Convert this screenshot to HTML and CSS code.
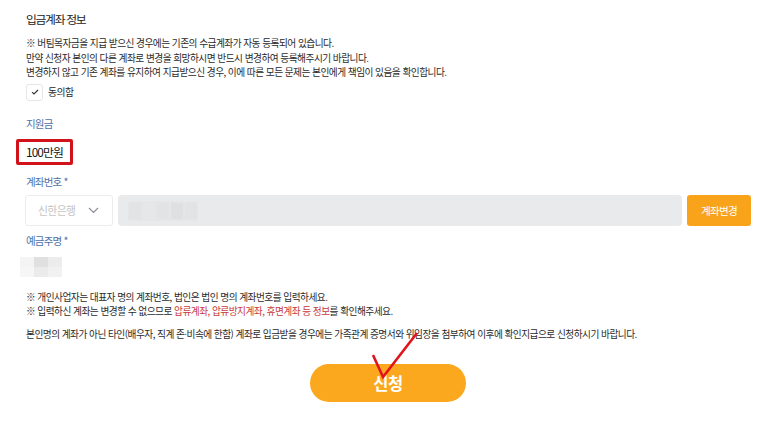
FILE: index.html
```html
<!DOCTYPE html>
<html lang="ko">
<head>
<meta charset="utf-8">
<link rel="stylesheet" href="styles.css">
</head>
<body>
<div class="page">
  <h2 class="title">입금계좌 정보</h2>
  <div class="notice">
    <p>※ 버팀목자금을 지급 받으신 경우에는 기존의 수급계좌가 자동 등록되어 있습니다.</p>
    <p>만약 신청자 본인의 다른 계좌로 변경을 희망하시면 반드시 변경하여 등록해주시기 바랍니다.</p>
    <p>변경하지 않고 기존 계좌를 유지하여 지급받으신 경우, 이에 따른 모든 문제는 본인에게 책임이 있음을 확인합니다.</p>
  </div>
  <label class="agree"><span class="box"><svg width="8" height="6" viewBox="0 0 8 6"><path d="M1 3.2 L3 5 L7 1" fill="none" stroke="#333" stroke-width="1.1"/></svg></span><span>동의함</span></label>

  <div class="label">지원금</div>
  <div class="amount">100만원</div>

  <div class="label">계좌번호 <span class="star">*</span></div>
  <div class="acct-row">
    <div class="select"><span>신한은행</span><svg width="11" height="7" viewBox="0 0 11 7"><path d="M1 1 L5.5 5.5 L10 1" fill="none" stroke="#8a8f99" stroke-width="1.2"/></svg></div>
    <div class="input"><div class="blur"><i></i><i></i><i></i><i></i><i></i></div></div>
    <button class="change">계좌변경</button>
  </div>

  <div class="label">예금주명 <span class="star">*</span></div>
  <div class="name-blur"><i></i><i></i><i></i><i></i><i></i><i></i></div>

  <div class="notes">
    <p>※ 개인사업자는 대표자 명의 계좌번호, 법인은 법인 명의 계좌번호를 입력하세요.</p>
    <p>※ 입력하신 계좌는 변경할 수 없으므로 <span class="red">압류계좌, 압류방지계좌, 휴면계좌 등 정보</span>를 확인해주세요.</p>
  </div>
  <p class="para">본인명의 계좌가 아닌 타인(배우자, 직계 존·비속에 한함) 계좌로 입금받을 경우에는 가족관계 증명서와 위임장을 첨부하여 이후에 확인지급으로 신청하시기 바랍니다.</p>

  <div class="submit-wrap"><button class="submit">신청</button></div>
</div>
<svg class="mark" width="773" height="433" viewBox="0 0 773 433"><path d="M373 355 L383 377 L417 333" fill="none" stroke="#e0141c" stroke-width="2.6" stroke-linejoin="miter"/></svg>
</body>
</html>
```
FILE: styles.css
```css
* { box-sizing: border-box; margin: 0; padding: 0; }
html, body { background: #fff; }
body {
  width: 773px; height: 433px; overflow: hidden; position: relative;
  font-family: "Noto Sans CJK KR", "Noto Sans", sans-serif;
  color: #333;
}
.page { padding: 11px 0 0 26px; }
.title { font-size: 11.8px; font-weight: 400; letter-spacing: -1.3px; line-height: 16px; color: #222; }
.notice { margin-top: 9px; }
.notice p, .notes p, .para { font-size: 9.7px; letter-spacing: -0.53px; line-height: 14.5px; color: #2a2a2a; }
.agree { display: flex; align-items: center; gap: 5px; margin-top: 4px; font-size: 9.8px; letter-spacing: -0.5px; color: #2a2a2a; }
.box { width: 17px; height: 17px; border: 1px solid #e6e6e6; border-radius: 3px; display: flex; align-items: center; justify-content: center; }
.label { font-size: 10.5px; letter-spacing: -0.8px; color: #4f72a8; line-height: 14px; }
.agree + .label { margin-top: 16px; }
.star { color: #4f72a8; }
.amount {
  margin: 8px 0 0 -10px; width: 57px; height: 26px;
  border: 3px solid #d2121b; border-radius: 2px;
  font-size: 11.8px; letter-spacing: -0.9px; color: #111;
  display: flex; align-items: center; padding-left: 7px;
}
.amount + .label { margin-top: 10px; }
.acct-row { display: flex; gap: 5px; margin: 6px 0 0 -1px; height: 31px; }
.select { width: 88px; border: 1px solid #ececec; border-radius: 3px; display: flex; align-items: center; gap: 13px; padding-left: 12px; font-size: 10.8px; letter-spacing: -0.6px; color: #c4c4c4; }
.input { width: 564px; background: #e9eaec; border-radius: 4px; padding: 6px 0 0 10px; }
.blur { display: flex; width: 70px; height: 20px; background: #e5e6e8; }
.blur i { flex: 1; background: #e2e3e5; margin: 2px 1px; }
.blur i:nth-child(2) { background: #e6e7e9; }
.blur i:nth-child(4) { background: #dfe0e2; }
.change { width: 64px; background: #f9a31a; border: 0; border-radius: 3px; color: #fff; font-family: inherit; font-size: 10.6px; letter-spacing: -0.7px; }
.acct-row + .label { margin-top: 8px; }
.name-blur { display: grid; grid-template-columns: repeat(3, 14px); grid-template-rows: 10px 10px; margin: 9px 0 0 -6px; }
.name-blur i:nth-child(1) { background: #f4f4f4; }
.name-blur i:nth-child(2) { background: #e0e0e0; }
.name-blur i:nth-child(3) { background: #ececec; }
.name-blur i:nth-child(4) { background: #f6f6f6; }
.name-blur i:nth-child(5) { background: #ebebeb; }
.name-blur i:nth-child(6) { background: #f1f1f1; }
.notes { margin-top: 13px; }
.red { color: #c73a3a; }
.para { margin-top: 8px; }
.submit-wrap { display: flex; padding-left: 284px; margin-top: 23px; }
.submit { width: 156px; height: 38px; border: 0; border-radius: 19px; background: #fba81e; color: #fff; font-family: inherit; font-weight: 700; font-size: 16.5px; letter-spacing: -0.5px; }
.mark { position: absolute; left: 0; top: 0; pointer-events: none; }
```
